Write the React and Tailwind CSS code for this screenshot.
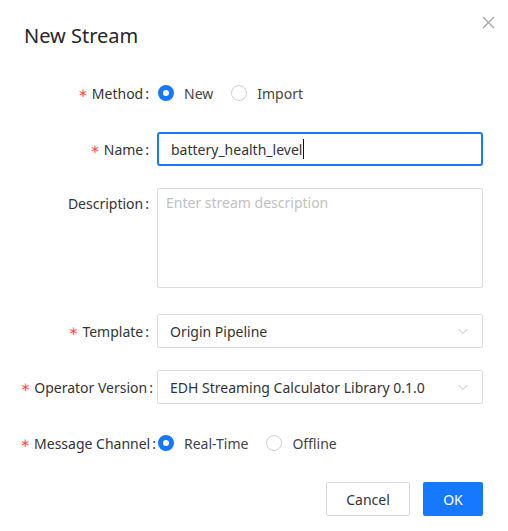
import React from "react";

const Label = ({ text, required, colonGap = "mr-[8px]", top }) => (
  <div
    className={`w-[157px] shrink-0 flex justify-end whitespace-nowrap text-[14px] text-[#333] ${
      top ? "items-start pt-[5px]" : "items-center"
    }`}
  >
    {required && (
      <span className="text-[#ff4d4f] text-[12px] mr-[4px] font-['DejaVu_Sans',sans-serif]">
        ∗
      </span>
    )}
    <span>{text}</span>
    <span className={`ml-[2px] ${colonGap}`}>:</span>
  </div>
);

const Radio = ({ checked, label }) => (
  <div className="flex items-center">
    <span
      className={`w-4 h-4 rounded-full bg-white ${
        checked ? "border-[5px] border-[#1677ff]" : "border border-[#cfcfd6]"
      }`}
    />
    <span className="ml-[10px] text-[14px] text-[#444]">{label}</span>
  </div>
);

const Chevron = () => (
  <svg width="12" height="12" viewBox="0 0 12 12" fill="none">
    <polyline points="1.5,4 6,8.5 10.5,4" stroke="#bcbcc4" strokeWidth="1" />
  </svg>
);

const Select = ({ value }) => (
  <div className="w-[326px] h-[34px] border border-[#dcdce0] rounded-[2px] flex items-center justify-between pl-[12px] pr-[13px] text-[14px] text-[#333]">
    <span>{value}</span>
    <Chevron />
  </div>
);

export default function App() {
  return (
    <div className="relative w-[508px] h-[531px] bg-white font-['Noto_Sans',sans-serif]">
      <button className="absolute right-[13px] top-[16px] w-[13px] h-[13px]">
        <svg width="13" height="13" viewBox="0 0 13 13" fill="none">
          <path d="M1 1 L12 12 M12 1 L1 12" stroke="#a3a3ab" strokeWidth="1.2" />
        </svg>
      </button>

      <h2 className="pt-[22px] pl-6 text-[20px] leading-[28px] text-[#262626]">New Stream</h2>

      <div className="flex flex-col mt-[27px]">
        <div className="flex h-8">
          <Label text="Method" required />
          <div className="flex items-center gap-[18px] pl-[1px]">
            <Radio checked label="New" />
            <Radio label="Import" />
          </div>
        </div>

        <div className="flex h-[34px] mt-[23px]">
          <Label text="Name" required />
          <div className="w-[326px] h-[34px] border-2 border-[#1677ff] rounded-[3px] flex items-center pl-[12px] text-[14px] text-[#333]">
            <span>battery_health_level</span>
            <span className="w-px h-[20px] bg-[#111] ml-[1px]" />
          </div>
        </div>

        <div className="flex mt-[22px]">
          <Label text="Description" top />
          <div className="w-[326px] h-[100px] border border-[#dcdce0] rounded-[2px] px-[8px] py-[3px] text-[14px] text-[#c0c0c0]">
            Enter stream description
          </div>
        </div>

        <div className="flex h-[34px] mt-[26px]">
          <Label text="Template" required />
          <Select value="Origin Pipeline" />
        </div>

        <div className="flex h-[34px] mt-[22px]">
          <Label text="Operator Version" required colonGap="mr-[4px]" />
          <Select value="EDH Streaming Calculator Library 0.1.0" />
        </div>

        <div className="flex h-8 mt-[23px]">
          <Label text="Message Channel" required colonGap="mr-[1px]" />
          <div className="flex items-center gap-[18px] pl-[1px]">
            <Radio checked label="Real-Time" />
            <Radio label="Offline" />
          </div>
        </div>

        <div className="flex justify-end gap-[13px] mt-[23px] pr-[25px]">
          <button className="w-[84px] h-[34px] border border-[#d9d9d9] rounded-[2px] bg-white text-[14px] text-[#333]">
            Cancel
          </button>
          <button className="w-[60px] h-[34px] rounded-[2px] bg-[#1677ff] text-[14px] text-white">
            OK
          </button>
        </div>
      </div>
    </div>
  );
}
